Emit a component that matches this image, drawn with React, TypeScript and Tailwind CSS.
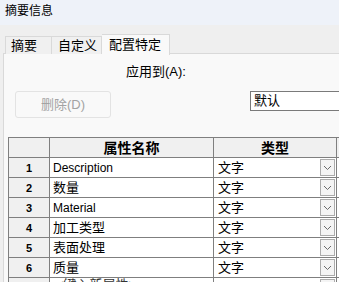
import React from "react";

const FONT = { fontFamily: '"Liberation Sans", "Noto Sans CJK SC", sans-serif' };

function Chevron() {
  return (
    <svg width="9" height="6" viewBox="0 0 9 6" fill="none">
      <path d="M1 1 L4.5 4.5 L8 1" stroke="#6b6b6b" strokeWidth="1" />
    </svg>
  );
}

function DropBtn() {
  return (
    <div className="absolute right-[1px] top-[1px] bottom-[1px] w-[15px] border border-[#acacac] bg-[#f4f4f4] flex items-center justify-center">
      <Chevron />
    </div>
  );
}

const rows = ["Description", "数量", "Material", "加工类型", "表面处理", "质量"];

export default function App() {
  return (
    <div className="w-[339px] h-[282px] overflow-hidden bg-[#efefef] text-black flex flex-col" style={FONT}>
      {/* title bar */}
      <div className="h-[25px] shrink-0 bg-[#eef2f9] px-[5px] pt-[3px] text-[12px] leading-[16px]">摘要信息</div>
      {/* tabs */}
      <div className="h-[29px] shrink-0 flex items-end pl-[5px] relative">
        <div className="absolute left-[3px] right-0 bottom-0 h-px bg-[#d9d9d9]" />
        <div className="relative h-[18px] w-[47px] border border-b-0 border-[#d9d9d9] bg-[#f0f0f0] pl-[5px] text-[13px] leading-[17px]">摘要</div>
        <div className="relative h-[18px] w-[50px] border border-b-0 border-l-0 border-[#d9d9d9] bg-[#f0f0f0] pl-[6px] text-[13px] leading-[17px]">自定义</div>
        <div className="relative h-[21px] w-[68px] border border-b-0 border-l-0 border-[#d9d9d9] bg-[#f9f9f9] pl-[7px] text-[13px] leading-[17px] -mb-px z-10 pt-[1px]">配置特定</div>
      </div>
      {/* panel */}
      <div className="flex-1 ml-[3px] border-l border-[#d9d9d9] bg-[#f9f9f9] relative">
        <div className="pl-[122px] pt-[9px] text-[13px] leading-[17px]">应用到(A):</div>
        <div className="flex items-start mt-[11px]">
          <div className="ml-[11px] w-[96px] h-[27px] border border-[#e3e3e3] rounded-[3px] bg-[#f9f9f9] flex items-center justify-center text-[13px] text-[#a3a3a3]">
            删除(D)
          </div>
          <div className="ml-[139px] flex-1 h-[20px] border border-r-0 border-[#7a7a7a] bg-white pl-[3px] text-[13px] leading-[18px]">默认</div>
        </div>
        <table className="ml-[4px] mt-[19px] border-collapse table-fixed w-[420px] text-[13px]">
          <colgroup>
            <col className="w-[41px]" />
            <col className="w-[164px]" />
            <col className="w-[123px]" />
            <col className="w-[92px]" />
          </colgroup>
          <thead>
            <tr className="h-[20px] bg-[#f0f0f0]">
              <th className="border border-[#7f7f7f] p-0" />
              <th className="border border-[#7f7f7f] p-0 text-[14px] font-bold leading-[18px] text-center">属性名称</th>
              <th className="border border-[#7f7f7f] p-0 text-[14px] font-bold leading-[18px] text-center">类型</th>
              <th className="border border-[#7f7f7f] p-0" />
            </tr>
          </thead>
          <tbody>
            {rows.map((r, i) => (
              <tr key={i} className="h-[20px]">
                <td className="border border-[#7f7f7f] bg-[#f0f0f0] p-0 text-center text-[11px] font-bold leading-[18px]">{i + 1}</td>
                <td className={"border border-[#7f7f7f] bg-white p-0 pl-[3px] leading-[18px] whitespace-nowrap " + (/^[A-Za-z]/.test(r) ? "text-[12px]" : "text-[13px]")}>{r}</td>
                <td className="border border-[#7f7f7f] bg-white p-0 pl-[4px] leading-[18px] relative">
                  文字
                  <DropBtn />
                </td>
                <td className="border border-[#7f7f7f] bg-white p-0" />
              </tr>
            ))}
            <tr className="h-[20px]">
              <td className="border border-[#7f7f7f] bg-[#f0f0f0] p-0" />
              <td className="border border-[#7f7f7f] bg-white p-0 pl-[6px] leading-[13px] align-top text-[#333] whitespace-nowrap">&lt;键入新属性&gt;</td>
              <td className="border border-[#7f7f7f] bg-white p-0 relative">
                <DropBtn />
              </td>
              <td className="border border-[#7f7f7f] bg-white p-0" />
            </tr>
          </tbody>
        </table>
      </div>
    </div>
  );
}
